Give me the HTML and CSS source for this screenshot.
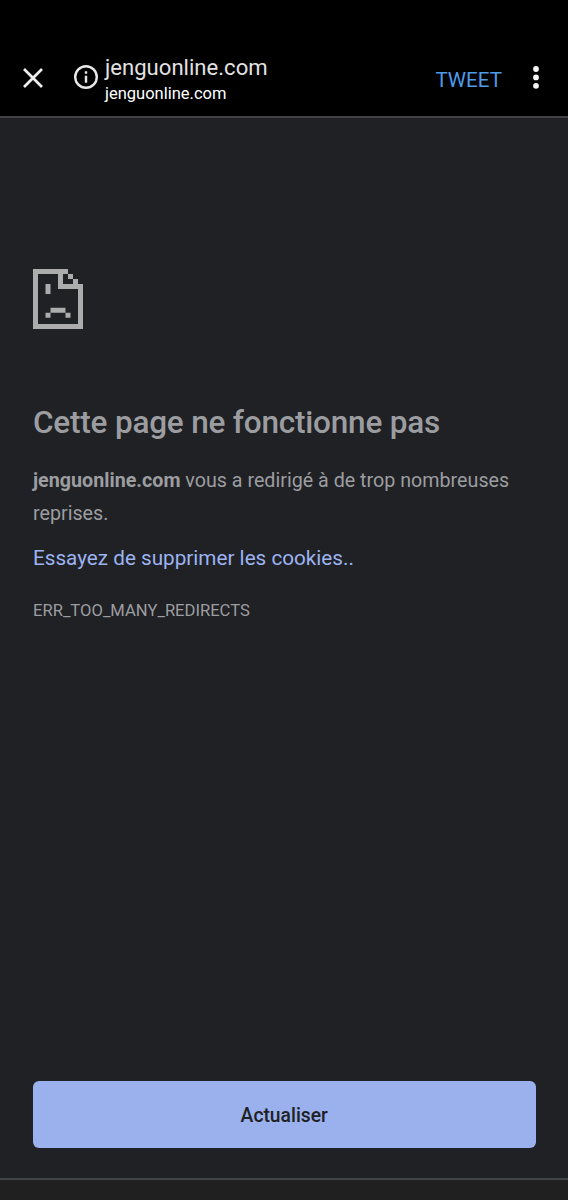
FILE: index.html
```html
<!DOCTYPE html>
<html lang="fr">
<head>
<meta charset="utf-8">
<title>jenguonline.com</title>
<link rel="stylesheet" href="styles.css">
</head>
<body>
<div class="screen">
  <header class="toolbar">
    <svg class="close" viewBox="0 0 20 20"><path d="M1 1 19 19M19 1 1 19"/></svg>
    <svg class="info" viewBox="0 0 24 24"><circle cx="12" cy="12" r="10.8"/><path d="M12 10.8v7M12 6.2v2.6"/></svg>
    <div class="site">
      <div class="site-title"><span>jenguonline.com</span></div>
      <div class="site-host"><span>jenguonline.com</span></div>
    </div>
    <div class="tweet"><span>TWEET</span></div>
    <svg class="more" viewBox="0 0 6 23"><circle cx="3" cy="3" r="2.9"/><circle cx="3" cy="11.4" r="2.9"/><circle cx="3" cy="19.8" r="2.9"/></svg>
  </header>
  <main class="page">
    <svg class="sad" viewBox="0 0 50 60"><path fill-rule="evenodd" d="M0 0H35V5H30V15H45V20H25V5H5V55H45V15H50V60H0ZM35 5h5v5h-5ZM40 10h5v5h-5ZM12.5 15h5v10h-5ZM17.5 38.7h15v5h-15ZM12.5 43.7h5v5h-5ZM32.5 43.7h5v5h-5Z"/></svg>
    <h1 class="heading"><span>Cette page ne fonctionne pas</span></h1>
    <p class="message"><strong>jenguonline.com</strong> vous a redirigé à de trop nombreuses reprises.</p>
    <p class="suggestion"><span>Essayez de supprimer les cookies..</span></p>
    <p class="code"><span>ERR_TOO_MANY_REDIRECTS</span></p>
    <button class="reload">Actualiser</button>
  </main>
  <footer class="navbar"></footer>
</div>
</body>
</html>
```
FILE: styles.css
```css
* { box-sizing: border-box; }
body { margin: 0; background: #202124; font-family: Roboto, sans-serif; }
.screen { width: 568px; height: 1200px; display: flex; flex-direction: column; overflow: hidden; }
.toolbar { height: 118px; flex: none; display: flex; align-items: flex-start; background: #000; border-bottom: 2px solid #424246; padding: 0 29px 0 23px; }
.close { width: 20px; height: 20px; margin-top: 67.5px; fill: none; stroke: #eee; stroke-width: 2.7; }
.info { width: 24px; height: 24px; margin: 65px 0 0 30.5px; fill: none; stroke: #e8e8e8; stroke-width: 2.4; }
.site { margin: 53px 0 0 7.5px; flex: 1; white-space: nowrap; }
.site-title { font-size: 22.1px; line-height: 28px; color: #e2e2e2; }
.site-host { font-size: 16.5px; line-height: 26px; color: #fff; }
.tweet { margin: 66px 31px 0 0; font-size: 20.6px; line-height: 28px; color: #4e9be8; }
.more { width: 6px; height: 23px; margin-top: 66px; fill: #f5f5f5; }
.page { flex: 1; display: flex; flex-direction: column; padding: 151.4px 32.5px 30px 33px; color: #9c9da1; }
.sad { width: 50px; height: 60px; flex: none; fill: #acacac; }
.heading { margin: 73.8px 0 0; font-size: 31.5px; line-height: 40px; font-weight: 500; letter-spacing: -0.2px; }
.message { margin: 21px 0 0; font-size: 19.7px; line-height: 33px; }
.suggestion { margin: 12px 0 0; font-size: 20.7px; line-height: 33px; color: #9cb3f0; }
.code { margin: 26px 0 0; font-size: 16.6px; line-height: 20px; }
.reload { margin-top: auto; height: 67px; flex: none; border: 0; border-radius: 6px; background: #9ab1ed; color: #202124; font: 500 19.3px Roboto, sans-serif; padding: 1px 0 0; }
.navbar { height: 22px; flex: none; background: #202020; border-top: 2px solid #424345; }
```
